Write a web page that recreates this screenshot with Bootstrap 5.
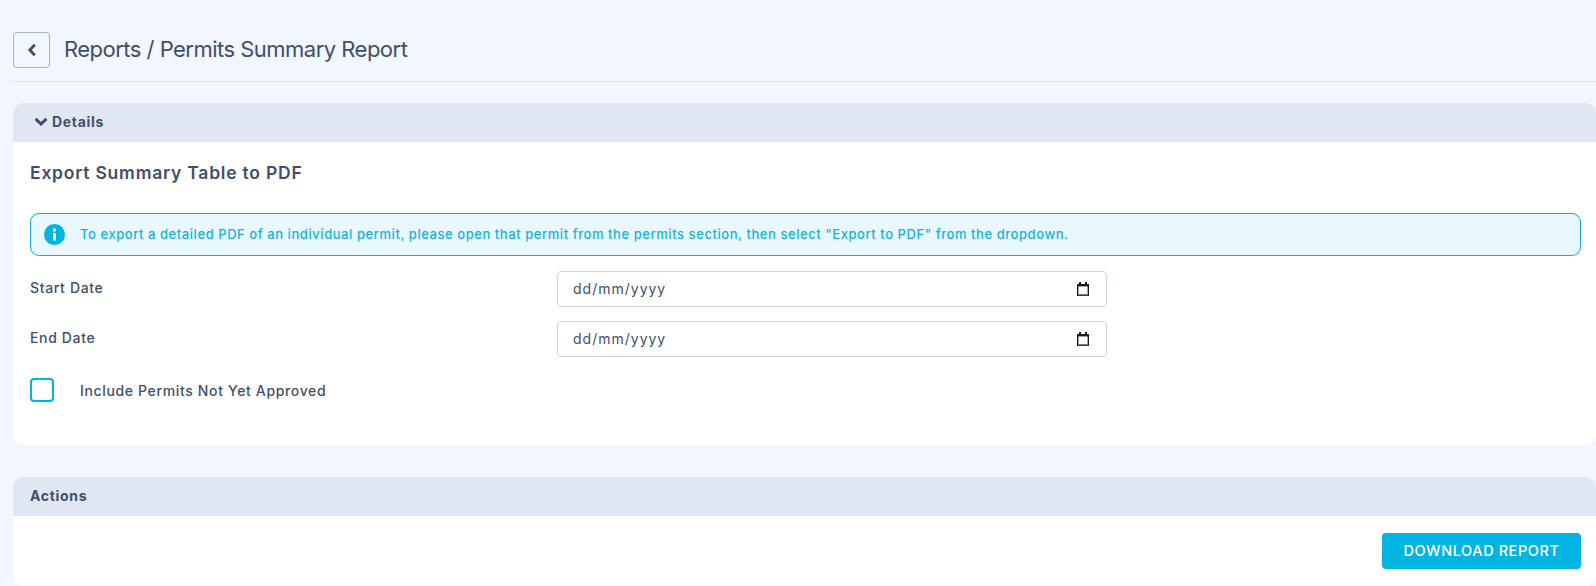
<!DOCTYPE html>
<html lang="en-GB">
<head>
<meta charset="utf-8">
<title>Permits Summary Report</title>
<link href="https://cdn.jsdelivr.net/npm/bootstrap@5.3.0/dist/css/bootstrap.min.css" rel="stylesheet">
<style>
html,body{height:586px;overflow:hidden}
body{background:#f2f6fe;font-family:Inter,"Noto Sans",sans-serif;color:#414f6b;padding:32px 0 0 13px}
.page-head{height:36px;margin-right:15px}
.back-btn{width:37px;height:36px;border:1px solid #9fb2cf;border-radius:4px;background:transparent;padding:0}
.page-title{font-size:22px;font-weight:400;letter-spacing:-.52px;margin:0 0 2px 14px;color:#414f6b}
.head-rule{border-top:1px solid #dfe3ea;margin:13px 0 21px}
.panel{background:#fff;border-radius:10px;overflow:hidden}
.panel-head{background:#e1e7f2;height:39px;font-size:14px;font-weight:700;letter-spacing:.7px;padding:0 0 2px 17px;color:#414f6b}
.panel-main{height:303px;padding:0 15px 0 17px}
.sub-title{font-size:17.5px;font-weight:600;letter-spacing:.78px;margin:0;padding-top:20px;height:71px}
.note{height:43px;background:#e9f8fe;border:1px solid #0fb0d8;border-radius:9px;color:#0fb4e4;font-size:13px;font-weight:500;letter-spacing:.56px;padding-left:13px;gap:15px}
.date-row{height:36px;margin-top:14px}
.date-row.first-row{margin-top:15px}
.date-label{width:527px;flex:none;font-size:14px;font-weight:500;letter-spacing:.65px;padding-bottom:3px}
.date-field{width:550px;height:36px;border:1px solid #cfd2d8;border-radius:4px;padding:0 17px 0 15px}
.date-input{border:0;outline:0;flex:1;min-width:0;background:transparent;padding:0 0 1px;font-size:14px;color:#414f6b;letter-spacing:1px}
.date-input::placeholder{color:#414f6b;opacity:1}
.check-row{margin-top:21px;gap:26px;font-size:14px;font-weight:500;letter-spacing:.65px}
.check-box{width:24px;height:24px;border:2px solid #00b5e2;border-radius:4px;flex:none}
.gap-panel{margin-top:32px}
.panel-foot{height:70px;padding:17px 15px 0 0}
.dl-btn{width:199px;height:36px;background:#00b5e2;color:#fff;border:0;border-radius:4px;font-size:14.5px;font-weight:500;letter-spacing:.58px;padding:0}
</style>
</head>
<body>
<div class="page-head d-flex align-items-center">
  <button class="back-btn d-flex align-items-center justify-content-center" aria-label="Back">
    <svg width="10" height="14" viewBox="0 0 10 14"><path d="M7.8 1.8 2.8 7l5 5.2" fill="none" stroke="#3f4f6d" stroke-width="2.8"/></svg>
  </button>
  <h1 class="page-title">Reports / Permits Summary Report</h1>
</div>
<div class="head-rule"></div>

<section class="panel">
  <div class="panel-head d-flex align-items-center gap-1">
    <svg class="ms-1" width="14" height="10" viewBox="0 0 14 10"><path d="M1.6 1.8 7 7 12.4 1.8" fill="none" stroke="#3f4f6d" stroke-width="3"/></svg>
    <span>Details</span>
  </div>
  <div class="panel-main">
    <h2 class="sub-title">Export Summary Table to PDF</h2>
    <div class="note d-flex align-items-center">
      <svg width="21" height="21" viewBox="0 0 21 21"><circle cx="10.5" cy="10.5" r="10.5" fill="#00b5e2"/><rect x="9" y="9" width="3" height="7.5" fill="#fff"/><circle cx="10.5" cy="6" r="1.7" fill="#fff"/></svg>
      <span>To export a detailed PDF of an individual permit, please open that permit from the permits section, then select "Export to PDF" from the dropdown.</span>
    </div>
    <div class="date-row first-row d-flex align-items-center">
      <label class="date-label" for="sd">Start Date</label>
      <div class="date-field d-flex align-items-center">
        <input id="sd" class="date-input" type="text" placeholder="dd/mm/yyyy">
        <svg width="12" height="14" viewBox="0 0 12 14"><path d="M2 0h2v2h4V0h2v2h2v12H0V2h2z" fill="#1a1a1a"/><rect x="1.4" y="4.4" width="9.2" height="7.6" fill="#fff"/><rect x="1" y="12" width="10" height="1.4" fill="#777"/></svg>
      </div>
    </div>
    <div class="date-row d-flex align-items-center">
      <label class="date-label" for="ed">End Date</label>
      <div class="date-field d-flex align-items-center">
        <input id="ed" class="date-input" type="text" placeholder="dd/mm/yyyy">
        <svg width="12" height="14" viewBox="0 0 12 14"><path d="M2 0h2v2h4V0h2v2h2v12H0V2h2z" fill="#1a1a1a"/><rect x="1.4" y="4.4" width="9.2" height="7.6" fill="#fff"/><rect x="1" y="12" width="10" height="1.4" fill="#777"/></svg>
      </div>
    </div>
    <div class="check-row d-flex align-items-center">
      <span class="check-box"></span>
      <span>Include Permits Not Yet Approved</span>
    </div>
  </div>
</section>

<section class="panel gap-panel">
  <div class="panel-head d-flex align-items-center">Actions</div>
  <div class="panel-foot d-flex justify-content-end align-items-start">
    <button class="dl-btn">DOWNLOAD REPORT</button>
  </div>
</section>
<script src="https://cdn.jsdelivr.net/npm/bootstrap@5.3.0/dist/js/bootstrap.bundle.min.js"></script>
</body>
</html>
